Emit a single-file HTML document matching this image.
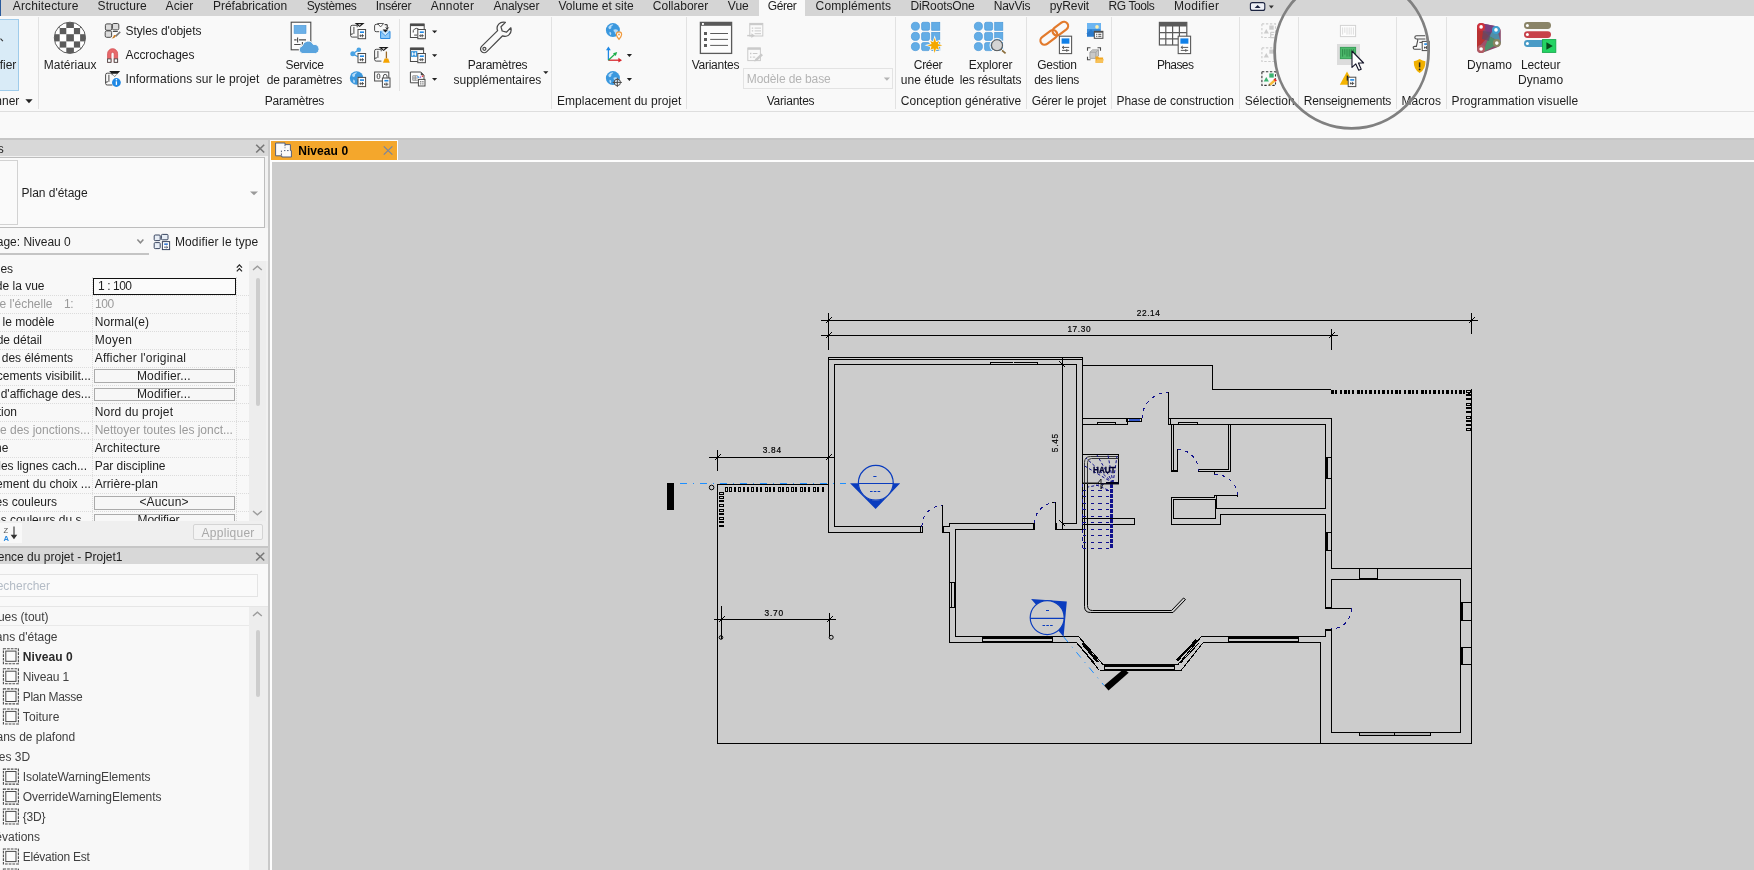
<!DOCTYPE html><html lang="fr"><head><meta charset="utf-8"><title>Revit - Niveau 0</title><style>
html,body{margin:0;padding:0}
body{width:1754px;height:870px;overflow:hidden;background:#cccccc;position:relative;font-family:"Liberation Sans",sans-serif;font-size:12px;color:#1e1e1e}
.abs,.g,.t,.b{position:absolute}
.g{left:0;top:0}
#labels,#panels,#ribbon,#canvas,#icons{will-change:transform}
.t{white-space:pre;line-height:14px;height:14px}
svg{overflow:visible}
</style></head><body>
<div class="g" id="canvas">
<div class="b" style="left:0px;top:137.6px;width:1754px;height:24.4px;background:#cdcdcd;"></div>
<div class="b" style="left:0px;top:137.6px;width:1754px;height:2.3px;background:#c6c6c6;"></div>
<div class="b" style="left:270px;top:159.8px;width:1484px;height:2.2px;background:#fdfdfd;"></div>
<div class="b" style="left:270px;top:140.2px;width:2px;height:729.8px;background:#fdfdfd;"></div>
<div class="b" style="left:269.8px;top:140.1px;width:128.2px;height:20.9px;background:#fdfdfd;"></div>
<div class="b" style="left:271px;top:141px;width:126px;height:18.8px;background:#f4a72c;"></div>
<svg id="plan" width="1754" height="870" viewBox="0 0 1754 870" style="position:absolute;left:0;top:0" shape-rendering="crispEdges">
<rect x="1359.5" y="732.5" width="71" height="3" fill="#b4b4b4" stroke="#000" stroke-width="1"/><path d="M1394.5,732V736" stroke="#000"/>
<path fill="none" stroke="#000" stroke-width="1" d="M821.0,320.5H1478.0M821.0,335.5H1338.0M828.5,313.0V350.0M1471.5,313.0V334.0M1331.5,329.0V350.0M825.5,323.5L832.0,317.0M825.5,338.5L832.0,332.0M1468.5,323.5L1475.0,317.0M1328.5,338.5L1335.0,332.0M709.0,457.5H834.5M717.5,450.0V471.0M714.5,460.5L720.5,454.5M825.5,460.5L831.5,454.5M714.0,619.5H836.0M721.5,606.0V639.0M829.5,613.0V636.0M718.5,622.5L724.5,616.5M826.5,622.5L832.5,616.5M1059.5,361.5L1065.5,367.5M1059.5,520.5L1065.5,526.5M717.5,484.0V744.0M717.0,743.5H1472.0M717.0,484.5H829.0M828.5,357.0V533.0M828.0,357.5H1083.0M828.0,359.5H1083.0M1082.5,357.0V530.0M834.5,364.0V527.0M834.0,364.5H1077.0M1076.5,364.0V524.0M1062.5,357.0V530.0M834.0,526.5H923.0M828.0,532.5H923.0M920.5,526.0V533.0M922.5,526.0V533.0M990.0,362.5H1013.0M1014.0,362.5H1037.0M990.5,362.0V364.0M1037.5,362.0V364.0M942.5,505.0V533.0M942.0,526.5H950.0M942.0,532.5H950.0M949.5,523.0V527.0M949.0,523.5H1035.0M955.0,529.5H1035.0M1055.5,502.0V530.0M1052.0,502.5H1056.0M1055.0,529.5H1083.0M1062.0,523.5H1077.0M949.5,532.0V643.0M955.5,529.0V637.0M949.0,582.5H956.0M949.0,607.5H956.0M951.5,582.0V608.0M955.0,636.5H1078.5M949.0,642.5H1076.5M982.5,636.0V643.0M1052.5,636.0V643.0M982.0,641.5H1052.0M1078.5,636.5L1103.0,664.5M1103.0,664.5L1178.0,664.5M1178.0,664.5L1201.5,636.5M1076.5,642.5L1099.5,670.5M1099.5,670.5L1181.0,670.5M1181.0,670.5L1203.2,642.5M1201.5,636.5H1326.0M1203.0,642.5H1321.0M1320.5,642.0V744.0M1104.5,664.0V671.0M1174.5,664.0V671.0M1104.0,669.5H1174.0M1228.5,636.0V643.0M1298.5,636.0V643.0M1228.0,641.5H1298.0M1325.5,424.0V509.0M1325.5,514.0V609.0M1325.5,629.0V637.0M1331.5,418.0V569.0M1331.5,579.0V609.0M1331.5,629.0V733.0M1325.0,457.5H1332.0M1325.0,478.5H1332.0M1325.0,532.5H1332.0M1325.0,550.5H1332.0M1082.0,365.5H1213.0M1212.5,365.0V390.0M1212.0,389.5H1331.0M1082.0,418.5H1128.0M1082.0,424.5H1128.0M1127.5,418.0V425.0M1097.0,422.5H1116.0M1097.5,422.0V425.0M1115.5,422.0V425.0M1168.5,392.0V425.0M1168.0,418.5H1332.0M1168.0,424.5H1326.0M1170.5,418.0V425.0M1171.5,424.0V472.0M1173.5,424.0V470.0M1171.0,471.5H1178.0M1177.5,449.0V472.0M1177.0,449.5H1181.0M1178.0,422.5H1197.0M1178.5,422.0V425.0M1197.5,422.0V425.0M1228.5,424.0V470.0M1230.5,424.0V472.0M1198.0,469.5H1229.0M1198.0,471.5H1231.0M1198.5,469.0V472.0M1214.5,471.0V475.0M1214.0,495.5H1238.0M1237.5,495.0V497.0M1171.0,497.5H1215.0M1214.5,495.0V498.0M1216.5,495.0V509.0M1216.0,508.5H1326.0M1171.5,497.0V525.0M1171.0,524.5H1221.0M1220.5,514.0V525.0M1220.0,514.5H1326.0M1173.0,499.5H1216.0M1173.0,518.5H1216.0M1173.5,499.0V519.0M1215.5,499.0V519.0M1082.0,518.5H1135.0M1082.0,524.5H1135.0M1134.5,518.0V525.0M1471.5,389.0V744.0M1331.0,568.5H1472.0M1331.0,579.5H1461.0M1359.5,568.0V580.0M1377.5,568.0V580.0M1331.0,732.5H1461.0M1460.5,579.0V733.0M1325.0,608.5H1352.0M1351.5,608.0V611.0M1460.0,602.5H1472.0M1460.0,620.5H1472.0M1460.0,647.5H1472.0M1460.0,664.5H1472.0M1082.0,454.5H1119.0M1118.5,454.0V484.0M1082.0,483.5H1119.0"/>
<rect x="942.0" y="526.0" width="2.0" height="7.0" fill="#000"/><rect x="1033.0" y="523.0" width="2.0" height="7.0" fill="#000"/><rect x="1055.0" y="523.0" width="2.0" height="7.0" fill="#000"/><rect x="953.5" y="582.0" width="2.0" height="26.0" fill="#000"/><rect x="982.0" y="636.0" width="70.0" height="3.0" fill="#000"/><rect x="1104.5" y="664.0" width="69.5" height="3.0" fill="#000"/><rect x="1228.0" y="636.0" width="70.0" height="3.0" fill="#000"/><rect x="1325.0" y="457.0" width="2.5" height="22.0" fill="#000"/><rect x="1325.0" y="532.0" width="2.5" height="19.0" fill="#000"/><rect x="1325.0" y="607.0" width="7.0" height="2.0" fill="#000"/><rect x="1325.0" y="629.0" width="7.0" height="2.0" fill="#000"/><rect x="1171.0" y="469.5" width="7.0" height="2.5" fill="#000"/><rect x="1359.0" y="577.5" width="19.0" height="2.5" fill="#000"/><rect x="1460.0" y="602.0" width="3.0" height="19.0" fill="#000"/><rect x="1460.0" y="647.0" width="3.0" height="18.0" fill="#000"/>
<path fill="none" stroke="#000" stroke-width="2.4" d="M1082.5,643.5L1098,662M1177,660.5L1196.5,640"/>
<path fill="none" stroke="#000" stroke-width="1" d="M1080,646.5L1095.5,664.5M1180.5,663L1199,643"/>
<g shape-rendering="auto" fill="none" stroke="#000" stroke-width="1"><path d="M1084.5,484V606.5Q1084.5,612.5 1090.5,612.5H1173L1185.5,599.5"/><path d="M1087.5,484V605.5Q1087.5,610.5 1092.5,610.5H1171.5L1183.5,598L1185.5,599.5"/></g>
<g shape-rendering="auto" fill="none" stroke="#333" stroke-width="1"><path d="M1118.5,456.5H1090.5Q1084.5,456.5 1084.5,462.5V484"/><path d="M1118.5,458.5H1091.5Q1087.5,458.5 1087.5,462.5V484"/></g>
<rect x="725" y="487" width="3" height="5" fill="#000"/><rect x="726" y="488" width="1" height="3" fill="#ccc"/><rect x="729" y="487" width="3" height="5" fill="#000"/><rect x="730" y="488" width="1" height="3" fill="#ccc"/><rect x="734" y="487" width="2" height="5" fill="#000"/><rect x="738" y="487" width="3" height="5" fill="#000"/><rect x="739" y="488" width="1" height="3" fill="#ccc"/><rect x="743" y="487" width="2" height="5" fill="#000"/><rect x="747" y="487" width="2" height="5" fill="#000"/><rect x="751" y="487" width="3" height="5" fill="#000"/><rect x="752" y="488" width="1" height="3" fill="#ccc"/><rect x="756" y="487" width="2" height="5" fill="#000"/><rect x="760" y="487" width="2" height="5" fill="#000"/><rect x="765" y="487" width="3" height="5" fill="#000"/><rect x="766" y="488" width="1" height="3" fill="#ccc"/><rect x="769" y="487" width="2" height="5" fill="#000"/><rect x="773" y="487" width="2" height="5" fill="#000"/><rect x="778" y="487" width="3" height="5" fill="#000"/><rect x="779" y="488" width="1" height="3" fill="#ccc"/><rect x="782" y="487" width="2" height="5" fill="#000"/><rect x="786" y="487" width="3" height="5" fill="#000"/><rect x="787" y="488" width="1" height="3" fill="#ccc"/><rect x="791" y="487" width="3" height="5" fill="#000"/><rect x="792" y="488" width="1" height="3" fill="#ccc"/><rect x="795" y="487" width="2" height="5" fill="#000"/><rect x="800" y="487" width="3" height="5" fill="#000"/><rect x="801" y="488" width="1" height="3" fill="#ccc"/><rect x="804" y="487" width="2" height="5" fill="#000"/><rect x="808" y="487" width="2" height="5" fill="#000"/><rect x="813" y="487" width="3" height="5" fill="#000"/><rect x="814" y="488" width="1" height="3" fill="#ccc"/><rect x="817" y="487" width="2" height="5" fill="#000"/><rect x="822" y="487" width="2" height="5" fill="#000"/><rect x="719" y="492" width="5" height="3" fill="#000"/><rect x="720" y="493" width="3" height="1" fill="#ccc"/><rect x="719" y="496" width="5" height="3" fill="#000"/><rect x="720" y="497" width="3" height="1" fill="#ccc"/><rect x="719" y="500" width="5" height="2" fill="#000"/><rect x="719" y="504" width="5" height="3" fill="#000"/><rect x="720" y="505" width="3" height="1" fill="#ccc"/><rect x="719" y="509" width="5" height="3" fill="#000"/><rect x="720" y="510" width="3" height="1" fill="#ccc"/><rect x="719" y="513" width="5" height="2" fill="#000"/><rect x="719" y="517" width="5" height="3" fill="#000"/><rect x="720" y="518" width="3" height="1" fill="#ccc"/><rect x="719" y="521" width="5" height="2" fill="#000"/><rect x="719" y="525" width="5" height="2" fill="#000"/><rect x="1331" y="390" width="3" height="4" fill="#000"/><rect x="1335" y="390" width="2" height="4" fill="#000"/><rect x="1336" y="391" width="0" height="2" fill="#ccc"/><rect x="1340" y="390" width="2" height="4" fill="#000"/><rect x="1344" y="390" width="3" height="4" fill="#000"/><rect x="1348" y="390" width="2" height="4" fill="#000"/><rect x="1349" y="391" width="0" height="2" fill="#ccc"/><rect x="1352" y="390" width="2" height="4" fill="#000"/><rect x="1357" y="390" width="3" height="4" fill="#000"/><rect x="1361" y="390" width="2" height="4" fill="#000"/><rect x="1362" y="391" width="0" height="2" fill="#ccc"/><rect x="1365" y="390" width="2" height="4" fill="#000"/><rect x="1369" y="390" width="3" height="4" fill="#000"/><rect x="1374" y="390" width="2" height="4" fill="#000"/><rect x="1375" y="391" width="0" height="2" fill="#ccc"/><rect x="1378" y="390" width="2" height="4" fill="#000"/><rect x="1382" y="390" width="3" height="4" fill="#000"/><rect x="1387" y="390" width="2" height="4" fill="#000"/><rect x="1388" y="391" width="0" height="2" fill="#ccc"/><rect x="1391" y="390" width="2" height="4" fill="#000"/><rect x="1395" y="390" width="3" height="4" fill="#000"/><rect x="1399" y="390" width="2" height="4" fill="#000"/><rect x="1400" y="391" width="0" height="2" fill="#ccc"/><rect x="1404" y="390" width="2" height="4" fill="#000"/><rect x="1408" y="390" width="3" height="4" fill="#000"/><rect x="1412" y="390" width="2" height="4" fill="#000"/><rect x="1413" y="391" width="0" height="2" fill="#ccc"/><rect x="1416" y="390" width="2" height="4" fill="#000"/><rect x="1421" y="390" width="3" height="4" fill="#000"/><rect x="1425" y="390" width="2" height="4" fill="#000"/><rect x="1426" y="391" width="0" height="2" fill="#ccc"/><rect x="1429" y="390" width="2" height="4" fill="#000"/><rect x="1433" y="390" width="3" height="4" fill="#000"/><rect x="1438" y="390" width="2" height="4" fill="#000"/><rect x="1439" y="391" width="0" height="2" fill="#ccc"/><rect x="1442" y="390" width="2" height="4" fill="#000"/><rect x="1446" y="390" width="3" height="4" fill="#000"/><rect x="1451" y="390" width="2" height="4" fill="#000"/><rect x="1452" y="391" width="0" height="2" fill="#ccc"/><rect x="1455" y="390" width="2" height="4" fill="#000"/><rect x="1459" y="390" width="3" height="4" fill="#000"/><rect x="1463" y="390" width="2" height="4" fill="#000"/><rect x="1464" y="391" width="0" height="2" fill="#ccc"/><rect x="1468" y="390" width="2" height="4" fill="#000"/><rect x="1466" y="390" width="5" height="3" fill="#000"/><rect x="1467" y="391" width="3" height="1" fill="#ccc"/><rect x="1466" y="394" width="5" height="2" fill="#000"/><rect x="1466" y="398" width="5" height="2" fill="#000"/><rect x="1466" y="403" width="5" height="3" fill="#000"/><rect x="1467" y="404" width="3" height="1" fill="#ccc"/><rect x="1466" y="407" width="5" height="2" fill="#000"/><rect x="1466" y="411" width="5" height="2" fill="#000"/><rect x="1466" y="416" width="5" height="3" fill="#000"/><rect x="1467" y="417" width="3" height="1" fill="#ccc"/><rect x="1466" y="420" width="5" height="2" fill="#000"/><rect x="1466" y="424" width="5" height="2" fill="#000"/><rect x="1466" y="428" width="5" height="3" fill="#000"/><rect x="1467" y="429" width="3" height="1" fill="#ccc"/>
<g shape-rendering="auto" fill="none" stroke="#000" stroke-width="1"><circle cx="711.6" cy="487.5" r="2.3"/><circle cx="721" cy="637.5" r="1.8"/><circle cx="831.2" cy="637.3" r="2"/></g>
<rect x="667" y="483" width="7" height="27" fill="#000"/>
<polygon points="1104.1,685.4 1123.7,669 1128.7,672.8 1108.5,690.5" fill="#000" shape-rendering="auto"/>
<path d="M674,483.5H846" stroke="#1e8fff" stroke-width="1" stroke-dasharray="7 6 1 6" stroke-dashoffset="-6" fill="none"/>
<path d="M1063.6,636.8L1104,685.4" stroke="#1e8fff" stroke-width="1" stroke-dasharray="7 6 1 6" fill="none" shape-rendering="auto"/>
<g shape-rendering="auto"><path fill="#0a3cbe" fill-rule="evenodd" d="M850,483.3H900.2L875.6,509Z M858.4,483.3A17.4,17.4 0 0 0 893.2,483.3Z"/><circle cx="875.8" cy="482.8" r="17.4" fill="none" stroke="#0a3cbe" stroke-width="1.2"/><path d="M858,483.5H894" stroke="#0a3cbe" stroke-width="1.2"/><path d="M873.3,476.5h3.2M870,491.5h2.6m1.2,0h2.6m1.2,0h2.6" stroke="#0a3cbe" stroke-width="1"/></g>
<g shape-rendering="auto"><path fill="#0a3cbe" fill-rule="evenodd" d="M1031.1,599.1L1066.8,601.6L1063.6,636.8Z"/><circle cx="1047.2" cy="617.6" r="17" fill="#ccc" stroke="#0a3cbe" stroke-width="1.2"/><path d="M1030,618.4H1064.4" stroke="#0a3cbe" stroke-width="1.2"/><path d="M1046,610.5h3M1042.5,625.5h2.6m1.2,0h2.6m1.2,0h2.6" stroke="#0a3cbe" stroke-width="1"/></g>
<path d="M922,526.5A20.5,20.5 0 0 1 942,505.5M1034.5,523.5A21,21 0 0 1 1055,502.5M1142,418.5A26,26 0 0 1 1168,392.5M1177.5,449.5A21,21 0 0 1 1198.5,470.5M1214.5,474.5A22,22 0 0 1 1237.5,495.5M1351.5,608.5A20.5,20.5 0 0 1 1331.5,629" fill="none" stroke="#10108c" stroke-width="1" stroke-dasharray="3.2 4.6" shape-rendering="crispEdges"/>
<rect x="1126.5" y="418.5" width="15" height="3" fill="none" stroke="#000"/><rect x="1128.5" y="419" width="11" height="2" fill="#3558c8"/>
<path d="M1083,490.0H1110M1083,496.5H1110M1083,503.0H1110M1083,509.5H1110M1083,516.0H1110M1083,522.5H1110M1083,529.0H1110M1083,535.5H1110M1083,542.0H1110M1083,548.5H1110M1082.5,484V549" fill="none" stroke="#10108c" stroke-width="1" stroke-dasharray="3.4 4.2"/>
<path d="M1111.5,484V549" fill="none" stroke="#10108c" stroke-width="3" stroke-dasharray="3.5 1.5"/>
<path d="M1113,483L1083,465M1113,483L1086,458M1113,483L1097,455M1113,483L1108,455M1113,483L1117,456M1104,484L1088,487M1108,490L1094,484" fill="none" stroke="#10108c" stroke-width="1" stroke-dasharray="3 2" shape-rendering="auto"/>
<path d="M1083,483H1098L1101,479V489L1103,484H1119" fill="none" stroke="#222" stroke-width="1" shape-rendering="auto"/>
<path d="M1106,483H1119" stroke="#000018" stroke-width="2"/>
<text x="1148.3" y="316" textLength="23.2" font-family="Liberation Sans, sans-serif" font-size="8.3" fill="#000" stroke="#000" stroke-width="0.2" text-anchor="middle" lengthAdjust="spacing" shape-rendering="auto">22.14</text>
<text x="1079" y="332" textLength="23.2" font-family="Liberation Sans, sans-serif" font-size="8.3" fill="#000" stroke="#000" stroke-width="0.2" text-anchor="middle" lengthAdjust="spacing" shape-rendering="auto">17.30</text>
<text x="771.9" y="453" textLength="18.4" font-family="Liberation Sans, sans-serif" font-size="8.3" fill="#000" stroke="#000" stroke-width="0.2" text-anchor="middle" lengthAdjust="spacing" shape-rendering="auto">3.84</text>
<text x="773.8" y="616" textLength="18.4" font-family="Liberation Sans, sans-serif" font-size="8.3" fill="#000" stroke="#000" stroke-width="0.2" text-anchor="middle" lengthAdjust="spacing" shape-rendering="auto">3.70</text>
<text transform="translate(1058.2,443) rotate(-90)" textLength="18.4" font-family="Liberation Sans, sans-serif" font-size="8.3" fill="#000" stroke="#000" stroke-width="0.2" text-anchor="middle" lengthAdjust="spacing" shape-rendering="auto">5.45</text>
<text x="1104.3" y="472.8" font-family="Liberation Sans, sans-serif" font-weight="bold" font-size="8.6" fill="#000030" stroke="#000030" stroke-width="0.3" text-anchor="middle" textLength="22.5" lengthAdjust="spacingAndGlyphs" shape-rendering="auto">HAUT</text>
</svg>
</div>
<div class="g" id="ribbon">
<div class="b" style="left:0px;top:0px;width:1754px;height:112px;background:#f9f9f9;"></div>
<div class="b" style="left:0px;top:0px;width:1754px;height:15.6px;background:#d5d5d5;"></div>
<div class="b" style="left:759.1px;top:0px;width:46.1px;height:16px;background:#f9f9f9;"></div>
<div class="b" style="left:0px;top:0px;width:1.2px;height:15.6px;background:#2a5a9c;"></div>
<div class="b" style="left:0px;top:111px;width:1754px;height:1px;background:#dedede;"></div>
<div class="b" style="left:0px;top:112px;width:1754px;height:25.6px;background:#f9f9f9;"></div>
<div class="b" style="left:-2px;top:19.4px;width:21px;height:71.4px;background:#d9ebf7;box-sizing:border-box;border:1px solid #9fcbea;"></div>
<div class="b" style="left:38px;top:17px;width:1px;height:92px;background:#e2e2e2;"></div>
<div class="b" style="left:551px;top:17px;width:1px;height:92px;background:#e2e2e2;"></div>
<div class="b" style="left:686px;top:17px;width:1px;height:92px;background:#e2e2e2;"></div>
<div class="b" style="left:894.9px;top:17px;width:1px;height:92px;background:#e2e2e2;"></div>
<div class="b" style="left:1025.9px;top:17px;width:1px;height:92px;background:#e2e2e2;"></div>
<div class="b" style="left:1111.1px;top:17px;width:1px;height:92px;background:#e2e2e2;"></div>
<div class="b" style="left:1238.9px;top:17px;width:1px;height:92px;background:#e2e2e2;"></div>
<div class="b" style="left:1298.1px;top:17px;width:1px;height:92px;background:#e2e2e2;"></div>
<div class="b" style="left:1396.2px;top:17px;width:1px;height:92px;background:#e2e2e2;"></div>
<div class="b" style="left:1446.1px;top:17px;width:1px;height:92px;background:#e2e2e2;"></div>
<div class="b" style="left:399px;top:19.4px;width:1px;height:71.4px;background:#e2e2e2;"></div>
<div class="b" style="left:743.2px;top:68.2px;width:149.6px;height:21.2px;background:#f9f9f9;box-sizing:border-box;border:1px solid #e3e3e3;"></div>
<div class="b" style="left:1336.5px;top:44.3px;width:23.3px;height:21.2px;background:#dcdcdc;"></div>
</div>
<div class="g" id="panels">
<div class="b" style="left:0px;top:139.9px;width:268.1px;height:730.1px;background:#f1f1f1;"></div>
<div class="b" style="left:268.1px;top:139.9px;width:1.8px;height:730.1px;background:#c9c9c9;"></div>
<div class="b" style="left:0px;top:139.9px;width:268.1px;height:16.5px;background:#d8d8d8;"></div>
<div class="b" style="left:-2px;top:156.8px;width:266.8px;height:70.8px;background:#fafafa;box-sizing:border-box;border:1px solid #bdbdbd;"></div>
<div class="b" style="left:-2px;top:159.7px;width:19.6px;height:65.1px;background:#fafafa;box-sizing:border-box;border:1px solid #d2d2d2;"></div>
<div class="b" style="left:0px;top:228px;width:268.1px;height:32.5px;background:#f8f8f8;"></div>
<div class="b" style="left:0px;top:253.2px;width:148.8px;height:2px;background:#c4c4c4;"></div>
<div class="b" style="left:0px;top:260.5px;width:249px;height:260.3px;background:#f8f8f8;"></div>
<div class="b" style="left:0px;top:295px;width:249px;height:1px;border-top:1px dotted #dcdcdc;"></div>
<div class="b" style="left:0px;top:313px;width:249px;height:1px;border-top:1px dotted #dcdcdc;"></div>
<div class="b" style="left:0px;top:331px;width:249px;height:1px;border-top:1px dotted #dcdcdc;"></div>
<div class="b" style="left:0px;top:349px;width:249px;height:1px;border-top:1px dotted #dcdcdc;"></div>
<div class="b" style="left:0px;top:367px;width:249px;height:1px;border-top:1px dotted #dcdcdc;"></div>
<div class="b" style="left:0px;top:385px;width:249px;height:1px;border-top:1px dotted #dcdcdc;"></div>
<div class="b" style="left:0px;top:403px;width:249px;height:1px;border-top:1px dotted #dcdcdc;"></div>
<div class="b" style="left:0px;top:421px;width:249px;height:1px;border-top:1px dotted #dcdcdc;"></div>
<div class="b" style="left:0px;top:439px;width:249px;height:1px;border-top:1px dotted #dcdcdc;"></div>
<div class="b" style="left:0px;top:457px;width:249px;height:1px;border-top:1px dotted #dcdcdc;"></div>
<div class="b" style="left:0px;top:475px;width:249px;height:1px;border-top:1px dotted #dcdcdc;"></div>
<div class="b" style="left:0px;top:493px;width:249px;height:1px;border-top:1px dotted #dcdcdc;"></div>
<div class="b" style="left:0px;top:511px;width:249px;height:1px;border-top:1px dotted #dcdcdc;"></div>
<div class="b" style="left:92.3px;top:277px;width:1px;height:243.8px;border-left:1px dotted #dcdcdc;"></div>
<div class="b" style="left:235.8px;top:277px;width:1px;height:243.8px;border-left:1px dotted #dcdcdc;"></div>
<div class="b" style="left:93px;top:278px;width:143px;height:16.7px;background:#fbfbfb;box-sizing:border-box;border:1px solid #111;"></div>
<div class="b" style="left:94.2px;top:369.3px;width:140.8px;height:14.2px;background:#f7f7f7;box-sizing:border-box;border:1px solid #ababab;"></div>
<div class="b" style="left:94.2px;top:387.5px;width:140.8px;height:13.8px;background:#f7f7f7;box-sizing:border-box;border:1px solid #ababab;"></div>
<div class="b" style="left:94.2px;top:495.5px;width:140.8px;height:14px;background:#f7f7f7;box-sizing:border-box;border:1px solid #ababab;"></div>
<div class="b" style="left:0;top:510px;width:249px;height:10.8px;overflow:hidden"><div class="b" style="left:94.2px;top:3.7px;width:140.8px;height:14.3px;background:#f7f7f7;box-sizing:border-box;border:1px solid #ababab;"></div><span class="t" style="left:137.5px;top:2.6px;letter-spacing:-0.1px">Modifier...</span><span class="t" style="left:-60px;top:2.6px;width:142px;text-align:right">Schéma des couleurs du s...</span></div>
<div class="b" style="left:249px;top:260.5px;width:16.8px;height:260.3px;background:#ededed;"></div>
<div class="b" style="left:255.5px;top:278.3px;width:4.2px;height:127.5px;background:#cdcdcd;border-radius:2px;"></div>
<div class="b" style="left:0px;top:520.8px;width:268.1px;height:25px;background:#efefef;"></div>
<div class="b" style="left:0px;top:522.5px;width:21.7px;height:20.8px;background:#f8f8f8;"></div>
<div class="b" style="left:193.3px;top:523.7px;width:69.5px;height:16.6px;background:#f3f3f3;box-sizing:border-box;border:1px solid #d4d4d4;border-radius:2px;"></div>
<div class="b" style="left:0px;top:545.8px;width:268.1px;height:2.5px;background:#c6c6c6;"></div>
<div class="b" style="left:0px;top:548.3px;width:268.1px;height:15.5px;background:#d8d8d8;"></div>
<div class="b" style="left:0px;top:563.8px;width:268.1px;height:42.9px;background:#f9f9f9;"></div>
<div class="b" style="left:-2px;top:573.8px;width:259.5px;height:23.4px;background:#fafafa;box-sizing:border-box;border:1px solid #e4e4e4;"></div>
<div class="b" style="left:0px;top:606.7px;width:249px;height:263.3px;background:#f8f8f8;"></div>
<div class="b" style="left:0px;top:606.2px;width:268.1px;height:1px;background:#e6e6e6;"></div>
<div class="b" style="left:0px;top:625px;width:249px;height:1px;background:#e9e9e9;"></div>
<div class="b" style="left:249px;top:606.7px;width:19.1px;height:263.3px;background:#ededed;"></div>
<div class="b" style="left:255.5px;top:629.5px;width:4.2px;height:67.5px;background:#cdcdcd;border-radius:2px;"></div>
</div>
<svg class="g" id="icons" width="1754" height="870" viewBox="0 0 1754 870">
<rect x="1250.4" y="2.6" width="14.4" height="7.8" rx="2" fill="#eef0f6" stroke="#1b2340" stroke-width="1.1"/><path d="M1254.6,8h6l-3,-3z" fill="#1b2340"/><path d="M1268.8,5.6h5l-2.5,2.8z" fill="#333"/>
<path d="M0.5,38.6l2.4,2.6" stroke="#333" stroke-width="1.1"/>
<path d="M25.4,99.2h7.2l-3.6,4z" fill="#222"/>
<clipPath id="cm"><circle cx="69.9" cy="37.8" r="15.6"/></clipPath><circle cx="69.9" cy="37.8" r="15.6" fill="#fff"/><g clip-path="url(#cm)" fill="#5c5c5c"><rect x="54" y="21.8" width="5.7" height="6.2"/><rect x="66.3" y="21.8" width="7.6" height="6.2"/><rect x="80.1" y="21.8" width="5.7" height="6.2"/><rect x="59.7" y="28" width="6.6" height="6.2"/><rect x="73.9" y="28" width="6.2" height="6.2"/><rect x="54" y="34.2" width="5.7" height="7.2"/><rect x="66.3" y="34.2" width="7.6" height="7.2"/><rect x="80.1" y="34.2" width="5.7" height="7.2"/><rect x="59.7" y="41.4" width="6.6" height="6.2"/><rect x="73.9" y="41.4" width="6.2" height="6.2"/><rect x="54" y="47.6" width="5.7" height="6.1"/><rect x="66.3" y="47.6" width="7.6" height="6.1"/><rect x="80.1" y="47.6" width="5.7" height="6.1"/></g><circle cx="69.9" cy="37.8" r="15.6" fill="none" stroke="#5c5c5c" stroke-width="1"/>
<g transform="translate(104.8,23.3)" ><rect x="0.6" y="0.6" width="6.4" height="6.4" rx="1.4" fill="#dcdcdc" stroke="#4a4a4a" stroke-width="1"/><rect x="7.6" y="0.2" width="6.4" height="6.4" rx="1.4" fill="#dcdcdc" stroke="#4a4a4a" stroke-width="1"/><rect x="0.4" y="7.6" width="6.4" height="6.4" rx="1.4" fill="#dcdcdc" stroke="#4a4a4a" stroke-width="1"/><path d="M8,8.2h5" stroke="#4a4a4a" stroke-width="1"/><path d="M15.4,8.6l-4.6,4.4" stroke="#777" stroke-width="1.6"/><path d="M11.4,12.2q-1,2.6 -4.6,3q2,-1.6 2.4,-3.6z" fill="#c7761a"/></g>
<g transform="translate(107,47.3)" ><path d="M0.6,15V6.4a5,5 0 0 1 10,0V15h-3.4V6.6a1.6,1.6 0 0 0 -3.2,0V15z" fill="#e8696b" stroke="#d24d50" stroke-width="0.8"/><rect x="0.6" y="11.6" width="3.4" height="3.4" fill="#fff" stroke="#4a4a4a" stroke-width="0.9"/><rect x="7.2" y="11.6" width="3.4" height="3.4" fill="#fff" stroke="#4a4a4a" stroke-width="0.9"/></g>
<g transform="translate(105,71.4)" ><path d="M2.2,1.7999999999999998h5v2M2.2,1.7999999999999998q-1.6,0 -1.6,1.6v8.6q0,1.6 1.6,1.6h5.2M0.6,11.799999999999999q0,-1.4 1.6,-1.4h0.8M3.9,3.4v7" fill="none" stroke="#4a4a4a" stroke-width="1"/><path d="M4.2,-0.4h11l-5.5,5.8z" fill="#1a1a1a"/><path d="M7,2.3h5.4l-2.7,2.5z" fill="#f9f9f9"/><circle cx="11.4" cy="11.1" r="4.4" fill="#1e88e5"/><path d="M11.4,9.9v3.6" stroke="#fff" stroke-width="1.3"/><circle cx="11.4" cy="8.4" r="0.8" fill="#fff"/></g>
<rect x="291.2" y="22.2" width="19.6" height="27.6" fill="#fcfcfc" stroke="#4a4a4a" stroke-width="1.1"/><rect x="294.1" y="25.3" width="11.9" height="8.2" fill="#6bb0e8" stroke="#4a98d8" stroke-width="0.6"/><path d="M294.2,39.9h2.4M299,39.9h7M297.6,37.4v5M294.2,44.5h6.4M302.4,42v5M304,44.5h1" stroke="#4a4a4a" stroke-width="1.1" fill="none"/><path d="M302.8,53.6a3.9,3.9 0 0 1 -0.5,-7.7a5.8,5.8 0 0 1 11,-1.4a4.6,4.6 0 0 1 2.2,9.1z" fill="#5aa4de" stroke="#f9f9f9" stroke-width="1"/>
<g transform="translate(350,23.5)" ><path d="M2.2,1.7999999999999998h5v2M2.2,1.7999999999999998q-1.6,0 -1.6,1.6v8.6q0,1.6 1.6,1.6h5.2M0.6,11.799999999999999q0,-1.4 1.6,-1.4h0.8M3.9,3.4v7" fill="none" stroke="#4a4a4a" stroke-width="1"/><path d="M4.6,-0.4h10l-5.0,4z" fill="#1a1a1a"/><path d="M8.0,0.7000000000000001h3.2l-1.6,1.5z" fill="#fff"/><rect x="8" y="6" width="7.6" height="9.2" fill="#fdfdfd" stroke="#4a4a4a" stroke-width="1"/><rect x="10" y="7.9" width="3.9999999999999996" height="1.6" fill="#1e88e5"/><path d="M9.8,12.2h4.2M12.4,10.6v3.2M11,11.2l-1.2,1l1.2,1" stroke="#4a4a4a" stroke-width="0.9" fill="none"/></g>
<g transform="translate(374,23.5)" ><path d="M2.2,0.8h3M2.2,0.8q-1.6,0 -1.6,1.6v4.4q0,1.4 1.6,1.4h3" fill="none" stroke="#4a4a4a" stroke-width="1"/><path d="M3.6,0h6l-3,3.4z" fill="#fff" stroke="#4a4a4a" stroke-width="0.9"/><path d="M10.6,1.2h2.6v4M11.8,4l1.4,1.6l1.4,-1.6" fill="none" stroke="#222" stroke-width="1"/><path d="M6.6,7.8h9.4v7.2h-9.4z" fill="#90caf9" stroke="#2b8ae0" stroke-width="1"/><path d="M6.6,7.8l4.7,4.4l4.7,-4.4" fill="#cfe8fc" stroke="#2b8ae0" stroke-width="0.8"/><path d="M8.6,6h5.6l-2.8,3z" fill="#1a1a1a"/></g>
<g transform="translate(350,47.5)" ><path d="M2.8,6.2l6,-4M2.8,6.2l5,3" stroke="#3b98de" stroke-width="1.2"/><circle cx="8.8" cy="2.2" r="2.3" fill="#4aa3e4"/><circle cx="2.8" cy="6.2" r="2.5" fill="#4aa3e4"/><rect x="8" y="6" width="7.6" height="9.2" fill="#fdfdfd" stroke="#4a4a4a" stroke-width="1"/><rect x="10" y="7.9" width="3.9999999999999996" height="1.6" fill="#1e88e5"/><path d="M9.8,12.2h4.2M12.4,10.6v3.2M11,11.2l-1.2,1l1.2,1" stroke="#4a4a4a" stroke-width="0.9" fill="none"/></g>
<g transform="translate(374,47.5)" ><path d="M2.2,1.7999999999999998h5v2M2.2,1.7999999999999998q-1.6,0 -1.6,1.6v8.6q0,1.6 1.6,1.6h5.2M0.6,11.799999999999999q0,-1.4 1.6,-1.4h0.8M3.9,3.4v7" fill="none" stroke="#4a4a4a" stroke-width="1"/><path d="M4.6,-0.4h10l-5.0,4z" fill="#1a1a1a"/><path d="M8.0,0.7000000000000001h3.2l-1.6,1.5z" fill="#fff"/><path d="M12.4,4v7" stroke="#9a6a2a" stroke-width="1.3"/><path d="M10.6,11h3.6l1.6,4.2h-6.8z" fill="#f5a300"/></g>
<g transform="translate(350,71.4)" ><circle cx="6.6" cy="6.6" r="6.8" fill="#3b98de"/><path d="M2.0,3.3999999999999995q2,-2.8 5,-2.6q-0.4,1.6 -2,2.2q0.6,1.8 -1,2.6q-1.6,0.4 -2,-2.2zM7.199999999999999,6.199999999999999q2.4,-1.2 4.4,0.4q0.2,2.6 -1.8,4.4q-1.6,-0.4 -1.4,-2.4q-1.4,-0.8 -1.2,-2.4zM3.1999999999999997,8.2q1.6,0.2 1.8,1.8q-0.2,1.6 -1,1.8q-1.2,-1.4 -0.8,-3.6z" fill="#b4dbf8"/><rect x="8" y="6" width="7.6" height="9.2" fill="#fdfdfd" stroke="#4a4a4a" stroke-width="1"/><rect x="10" y="7.9" width="3.9999999999999996" height="1.6" fill="#1e88e5"/><path d="M9.8,12.2h4.2M12.4,10.6v3.2M11,11.2l-1.2,1l1.2,1" stroke="#4a4a4a" stroke-width="0.9" fill="none"/></g>
<g transform="translate(374,71.4)" ><rect x="0.6" y="0.6" width="14.2" height="9" fill="#fcfcfc" stroke="#4a4a4a" stroke-width="1"/><rect x="3.2" y="2.6" width="2.6" height="4.6" rx="1.2" fill="none" stroke="#4a4a4a" stroke-width="1"/><path d="M9.4,6.4v-1.6a1.8,1.8 0 0 1 3.6,0v1.6" fill="none" stroke="#4a4a4a" stroke-width="1"/><rect x="8.4" y="6.6" width="7.6" height="9.2" fill="#fdfdfd" stroke="#4a4a4a" stroke-width="1"/><rect x="10.4" y="8.5" width="3.9999999999999996" height="1.6" fill="#1e88e5"/><path d="M10.200000000000001,12.8h4.2M12.8,11.2v3.2M11.4,11.8l-1.2,1l1.2,1" stroke="#4a4a4a" stroke-width="0.9" fill="none"/></g>
<g transform="translate(409.8,23.5)" ><rect x="0.6" y="0.6" width="13.8" height="13.4" fill="#fcfcfc" stroke="#4a4a4a" stroke-width="1"/><rect x="0.6" y="0.2" width="13.8" height="2.4" fill="#4a4a4a"/><path d="M4.4,11.6h3M3.4,9a3.4,3.4 0 0 1 5.4,-3.4" fill="none" stroke="#4a4a4a" stroke-width="1"/><rect x="8" y="6" width="7.6" height="9.2" fill="#fdfdfd" stroke="#4a4a4a" stroke-width="1"/><rect x="10" y="7.9" width="3.9999999999999996" height="1.6" fill="#1e88e5"/><path d="M9.8,12.2h4.2M12.4,10.6v3.2M11,11.2l-1.2,1l1.2,1" stroke="#4a4a4a" stroke-width="0.9" fill="none"/></g>
<path d="M432,30.4h5.2l-2.6,2.9z" fill="#222"/>
<g transform="translate(409.8,47.5)" ><rect x="0.6" y="0.6" width="13.2" height="13.4" fill="#fcfcfc" stroke="#4a4a4a" stroke-width="1"/><rect x="0.6" y="0.2" width="13.2" height="2.4" fill="#4a4a4a"/><rect x="0.9" y="3.6" width="6.6" height="5.8" fill="#3b98de"/><path d="M2.6,4.8v3.4M5.6,4.8v3.4M2.6,6.5h3" stroke="#fff" stroke-width="1"/><rect x="8" y="6" width="7.6" height="9.2" fill="#fdfdfd" stroke="#4a4a4a" stroke-width="1"/><rect x="10" y="7.9" width="3.9999999999999996" height="1.6" fill="#1e88e5"/><path d="M9.8,12.2h4.2M12.4,10.6v3.2M11,11.2l-1.2,1l1.2,1" stroke="#4a4a4a" stroke-width="0.9" fill="none"/></g>
<path d="M432,54.2h5.2l-2.6,2.9z" fill="#222"/>
<g transform="translate(409.8,71.4)" ><path d="M0.6,0.6h10.4l3.2,3.2v7.6h-13.6z" fill="#fcfcfc" stroke="#4a4a4a" stroke-width="1"/><path d="M11,0.6v3.2h3.2z" fill="#4a4a4a"/><path d="M3,4.4h5M3,6.6h5M3,8.8h5M3,4.4v4.6M5.4,4.4v4.6" stroke="#888" stroke-width="0.9" fill="none"/><path d="M7.6,5l1.6,1.2" stroke="#1e88e5" stroke-width="1.2"/><path d="M10,6.2l1.2,-1" stroke="#8a3fd8" stroke-width="1.2"/><path d="M12.2,5.4l1.4,-1.4" stroke="#e53935" stroke-width="1.2"/><rect x="8.6" y="8" width="6.6" height="6.6" fill="#fcfcfc" stroke="#4a4a4a" stroke-width="1"/><path d="M10.2,9.6h1.4v1.4h-1.4zM12.4,9.6h1.4v1.4h-1.4zM10.2,11.8h1.4v1.4h-1.4zM12.4,11.8h1.4v1.4h-1.4z" fill="#888"/></g>
<path d="M432,77.9h5.2l-2.6,2.9z" fill="#222"/>
<g fill="none" stroke="#4a4a4a" stroke-width="1.25" stroke-linejoin="round"><path d="M481.6,46.4L497.6,30.6C495.6,25.6 500,21 505.4,22.4L501,26.8L502.2,31L506.4,32.2L510.8,27.8C512.4,33.2 507.6,37.8 502.6,35.8L486.8,51.6A3.6,3.6 0 0 1 481.6,46.4z"/><circle cx="484.4" cy="48.8" r="1.5"/></g>
<path d="M543.2,71.2h5.2l-2.6,2.9z" fill="#222"/>
<circle cx="612.9" cy="30.1" r="7" fill="#3b98de"/><path d="M608.3,26.900000000000002q2,-2.8 5,-2.6q-0.4,1.6 -2,2.2q0.6,1.8 -1,2.6q-1.6,0.4 -2,-2.2zM613.5,29.700000000000003q2.4,-1.2 4.4,0.4q0.2,2.6 -1.8,4.4q-1.6,-0.4 -1.4,-2.4q-1.4,-0.8 -1.2,-2.4zM609.5,31.700000000000003q1.6,0.2 1.8,1.8q-0.2,1.6 -1,1.8q-1.2,-1.4 -0.8,-3.6z" fill="#b4dbf8"/><path d="M619,39.4q-2.6,-3.2 -2.6,-4.9a2.6,2.6 0 0 1 5.2,0q0,1.7 -2.6,4.9z" fill="#fff" stroke="#f09a3e" stroke-width="1.2"/><circle cx="619" cy="34.5" r="0.9" fill="#f09a3e"/>
<path d="M608.4,60.2V49" stroke="#1e88e5" stroke-width="1.3"/><path d="M606,50.2l2.4,-3.6l2.4,3.6z" fill="#1e88e5"/><path d="M608.4,60.2H619" stroke="#d9262c" stroke-width="1.3"/><path d="M618.4,57.8l3.6,2.4l-3.6,2.4z" fill="#d9262c"/><path d="M608.4,60.2L615,54" stroke="#1fae4b" stroke-width="1.2"/><path d="M613,53.2l4.2,-1.2l-1.4,4z" fill="#1fae4b"/>
<path d="M626.8,54.1h5.2l-2.6,2.9z" fill="#222"/>
<circle cx="612.9" cy="78.1" r="7" fill="#3b98de"/><path d="M608.3,74.89999999999999q2,-2.8 5,-2.6q-0.4,1.6 -2,2.2q0.6,1.8 -1,2.6q-1.6,0.4 -2,-2.2zM613.5,77.69999999999999q2.4,-1.2 4.4,0.4q0.2,2.6 -1.8,4.4q-1.6,-0.4 -1.4,-2.4q-1.4,-0.8 -1.2,-2.4zM609.5,79.69999999999999q1.6,0.2 1.8,1.8q-0.2,1.6 -1,1.8q-1.2,-1.4 -0.8,-3.6z" fill="#b4dbf8"/><circle cx="617.3" cy="82.4" r="3.2" fill="#f9f9f9" fill-opacity="0.75" stroke="#4a4a4a" stroke-width="1"/><path d="M617.3,77.8v9.2M612.7,82.4h9.2" stroke="#4a4a4a" stroke-width="1"/>
<path d="M626.8,78.1h5.2l-2.6,2.9z" fill="#222"/>
<rect x="700.4" y="22.4" width="31.2" height="31" fill="#fcfcfc" stroke="#5a5a5a" stroke-width="1.3"/><rect x="700.4" y="22" width="31.2" height="3.8" fill="#5a5a5a"/><rect x="702" y="23" width="1.9" height="1.9" fill="#fff"/><path d="M704,32h3v3h-3zM704,37.9h3v3h-3zM704,43.9h3v3h-3z" fill="#5a5a5a"/><path d="M710.2,33.5h17.8M710.2,39.4h17.8M710.2,45.4h17.8" stroke="#5a5a5a" stroke-width="1"/>
<g transform="translate(747.2,23)" ><rect x="2.6" y="0.4" width="13" height="12.6" fill="#fafafa" stroke="#cacaca" stroke-width="1"/><rect x="2.6" y="0.2" width="13" height="2" fill="#cacaca"/><path d="M4.6,4.4h1.4v1.4h-1.4zM4.6,7.2h1.4v1.4h-1.4z" fill="#cacaca"/><path d="M7.4,5.1h6.4M7.4,7.9h6.4M7.4,10.7h6.4" stroke="#cacaca" stroke-width="1"/><path d="M0,12.6h5.2" stroke="#cacaca" stroke-width="1.4"/><path d="M4.2,10.2l3.4,2.4l-3.4,2.4z" fill="#cacaca"/></g>
<g transform="translate(747.2,47.4)" ><rect x="0.6" y="0.6" width="12.6" height="12.6" fill="#fafafa" stroke="#cacaca" stroke-width="1"/><rect x="0.6" y="0.2" width="12.6" height="2.2" fill="#cacaca"/><path d="M2.8,5.4h1.4v1.4h-1.4zM2.8,9h1.4v1.4h-1.4z" fill="#cacaca"/><path d="M5.6,6.1h4.6M5.6,9.7h2.4" stroke="#cacaca" stroke-width="1"/><path d="M7,14.2l1,-2.6l6,-5.6l1.8,1.8l-6,5.6z" fill="#cacaca"/></g>
<path d="M883.8,77.6h6.2l-3.1,3.2z" fill="#b4b4b4"/>
<g fill="#63ade6" stroke="#4a98d8" stroke-width="0.7"><circle cx="915.4" cy="26.3" r="4.05"/><rect x="921.6" y="22.3" width="8" height="8" rx="1.6"/><rect x="931.7" y="22.3" width="8.1" height="8"/><circle cx="915.4" cy="36.4" r="4.05"/><rect x="921.6" y="32.4" width="8" height="8" rx="1.6"/><rect x="931.7" y="32.4" width="8.1" height="8"/><circle cx="915.4" cy="46.599999999999994" r="4.05"/><rect x="921.6" y="42.599999999999994" width="8" height="8" rx="1.6"/><rect x="931.7" y="42.599999999999994" width="8.1" height="8"/></g><polygon points="934.7,37.7 936.0,42.2 939.1,40.9 937.8,44.0 942.3,45.3 937.8,46.6 939.1,49.7 936.0,48.4 934.7,52.9 933.4,48.4 930.3,49.7 931.6,46.6 927.1,45.3 931.6,44.0 930.3,40.9 933.4,42.2" fill="#f4a800" stroke="#f9f9f9" stroke-width="1.4" paint-order="stroke"/>
<g fill="#63ade6" stroke="#4a98d8" stroke-width="0.7"><circle cx="978.4" cy="26.3" r="4.05"/><rect x="984.6" y="22.3" width="8" height="8" rx="1.6"/><rect x="994.7" y="22.3" width="8.1" height="8"/><circle cx="978.4" cy="36.4" r="4.05"/><rect x="984.6" y="32.4" width="8" height="8" rx="1.6"/><rect x="994.7" y="32.4" width="8.1" height="8"/><circle cx="978.4" cy="46.599999999999994" r="4.05"/><rect x="984.6" y="42.599999999999994" width="8" height="8" rx="1.6"/><rect x="994.7" y="42.599999999999994" width="8.1" height="8"/></g><path d="M1000.8,49.4l4.8,4" stroke="#8a6d3b" stroke-width="1.8"/><circle cx="997" cy="45.3" r="5.5" fill="#d4d4d4" stroke="#5a5a5a" stroke-width="1.1"/><circle cx="997" cy="45.3" r="7" fill="none" stroke="#f9f9f9" stroke-width="1"/>
<g fill="none" stroke="#e27a2c" stroke-width="2.2"><rect x="-8.6" y="-4.2" width="17.2" height="8.4" rx="4.2" transform="translate(1060.4,28.6) rotate(-37)"/><rect x="-9.4" y="-4.2" width="18.8" height="8.4" rx="4.2" transform="translate(1048.8,37.4) rotate(-37)"/></g>
<rect x="1059.4" y="36.2" width="12.2" height="17.4" fill="#fdfdfd" stroke="#5a5a5a" stroke-width="1.1"/><rect x="1061.6000000000001" y="38.400000000000006" width="7.799999999999999" height="5.3" fill="#1080e8"/><path d="M1062.0,47.400000000000006h7.199999999999999M1062.0,50.400000000000006h7.199999999999999M1064.0,46.0l-1.8,1.4l1.8,1.4M1066.8000000000002,49.0v2.8" stroke="#5a5a5a" stroke-width="1" fill="none"/>
<g transform="translate(1086.7,23.3)" ><rect x="0.3" y="-0.3" width="13.8" height="13.6" fill="#3a8edc"/><rect x="0.3" y="-0.3" width="13.8" height="6" fill="#6db6f2"/><circle cx="10.3" cy="3.6" r="1.8" fill="#fdf0b0"/><path d="M0.3,13.3v-3.4l4,-4l4.4,5v2.4z" fill="#2a7acc"/><rect x="7.6" y="8" width="8.6" height="7" fill="#fdfdfd" stroke="#4a4a4a" stroke-width="1"/><rect x="7.6" y="7.8" width="8.6" height="1.6" fill="#4a4a4a"/><path d="M9.4,11h1.2M9.4,13h1.2M11.6,11h3M11.6,13h3" stroke="#4a4a4a" stroke-width="1"/></g>
<g transform="translate(1086.9,47.2)" ><path d="M0.6,3.6v-3h3M10.6,0.6h3v3M0.6,9.6v3h3" fill="none" stroke="#4a4a4a" stroke-width="1.1"/><path d="M3,5l2.6,-2.4h6v6.2l-2.6,2.4h-6z" fill="#c9c9c9" stroke="#9a9a9a" stroke-width="0.8"/><path d="M3,5h6v6.2M9,5l2.6,-2.4" fill="none" stroke="#9a9a9a" stroke-width="0.8"/><path d="M8.6,9.2h2.6l0.8,1h4.2v5.4h-7.6z" fill="#f2a620"/><path d="M8.6,15.6l1.4,-3.6h7l-1.4,3.6z" fill="#f7c25a"/></g>
<rect x="1159.4" y="22.4" width="27.4" height="22.6" fill="#fcfcfc" stroke="#5a5a5a" stroke-width="1.2"/><rect x="1159.4" y="22" width="27.4" height="4.5" fill="#5a5a5a"/><path d="M1165.8,26v19M1172.6,26v19M1179.4,26v19M1159.4,32.6h27.4M1159.4,38.8h27.4" stroke="#5a5a5a" stroke-width="1.2"/><rect x="1178.2" y="36.2" width="12.4" height="17.4" fill="#fdfdfd" stroke="#5a5a5a" stroke-width="1.1"/><rect x="1180.4" y="38.400000000000006" width="8.0" height="5.3" fill="#1080e8"/><path d="M1180.8,47.400000000000006h7.4M1180.8,50.400000000000006h7.4M1182.8,46.0l-1.8,1.4l1.8,1.4M1185.8000000000002,49.0v2.8" stroke="#5a5a5a" stroke-width="1" fill="none"/>
<g transform="translate(1261.3,23.3)" ><rect x="0.6" y="0.6" width="13.6" height="13.6" fill="none" stroke="#cdcdcd" stroke-width="1.1" stroke-dasharray="2.4 1.6"/><path d="M2.4,10.2l2.6,-4.4l2.6,4.4z" fill="#cdcdcd"/><rect x="8" y="2.2" width="4.4" height="4.2" fill="#cdcdcd"/><path d="M9,8.6h4.6v6h-4.6z" fill="#f9f9f9"/><path d="M9.4,9h3.6M9.4,11.4h3M9.4,9v5.4h3.6" stroke="#cdcdcd" stroke-width="1.2" fill="none"/></g>
<g transform="translate(1261.3,47.3)" ><rect x="0.6" y="0.6" width="13.6" height="13.6" fill="none" stroke="#cdcdcd" stroke-width="1.1" stroke-dasharray="2.4 1.6"/><path d="M2.4,10.2l2.6,-4.4l2.6,4.4z" fill="#cdcdcd"/><rect x="8" y="2.2" width="4.4" height="4.2" fill="#cdcdcd"/></g>
<g transform="translate(1261.3,71.2)" ><rect x="0.6" y="0.6" width="13.6" height="13.6" fill="none" stroke="#333" stroke-width="1.1" stroke-dasharray="2.4 1.6"/><path d="M2.4,10.2l2.6,-4.4l2.6,4.4z" fill="#3cb371"/><rect x="8" y="2.2" width="4.4" height="4.2" fill="#3cb371"/><path d="M7.2,14.6l0.6,-2.4l5.2,-4.6l2,2.2l-5.2,4.6z" fill="#f6bb3a" stroke="#f9f9f9" stroke-width="0.6"/><path d="M12.2,8.3l1.4,-1.2l2,2.2l-1.4,1.2z" fill="#e8262a"/><path d="M7.2,14.6l0.5,-2l1.5,1.6z" fill="#333"/></g>
<rect x="1340.4" y="25.4" width="15.2" height="11.2" fill="#fdfdfd" stroke="#d2d2d2" stroke-width="1"/><path d="M1342.6,27.4v7.2M1344.8,27.4v5.4M1347,27.4v7.2M1349.2,27.4v7.2M1351.2,27.4v7.2M1353.4,27.4v7.2" stroke="#dedede" stroke-width="1"/>
<rect x="1340.4" y="47.4" width="15.2" height="11.2" fill="#4dba6c" stroke="#38a058" stroke-width="1"/><path d="M1342.6,49.2v7.4M1344.8,49.2v5.4M1347,49.2v7.4M1349.2,49.2v7.4M1351.2,49.2v7.4M1353.4,49.2v7.4" stroke="#2e8a4a" stroke-width="1"/>
<path d="M1347,71.4l7.2,13.4h-14.4z" fill="#f5b400"/><path d="M1347.4,75.6v5" stroke="#222" stroke-width="1.4"/><g transform="translate(1340.2,71)" ><rect x="8" y="6.2" width="7.6" height="9.4" fill="#fdfdfd" stroke="#4a4a4a" stroke-width="1"/><rect x="10" y="8.1" width="3.9999999999999996" height="1.6" fill="#1e88e5"/><path d="M9.8,12.4h4.2M12.4,10.8v3.2M11,11.4l-1.2,1l1.2,1" stroke="#4a4a4a" stroke-width="0.9" fill="none"/></g>
<g transform="translate(1414,35)" ><path d="M2.6,0.8h8.6M2.6,0.8q-1.8,0 -1.8,1.6t1.8,1.6h1.4l-1.6,7.4h-1.6q-1.6,0 -1.6,1.4t1.6,1.4h6" fill="none" stroke="#4a4a4a" stroke-width="1.1"/><path d="M4.6,4h6.8M5.4,7.4h3" stroke="#4a4a4a" stroke-width="1"/><rect x="8.2" y="6.4" width="7" height="9.2" fill="#fdfdfd" stroke="#4a4a4a" stroke-width="1"/><rect x="10.2" y="8.3" width="3.4" height="1.6" fill="#1e88e5"/><path d="M10.0,12.600000000000001h4.2M12.6,11.0v3.2M11.2,11.600000000000001l-1.2,1l1.2,1" stroke="#4a4a4a" stroke-width="0.9" fill="none"/></g>
<path d="M1419.6,59q3,2 5.8,2.2q0.4,8 -5.8,11.8q-6.2,-3.8 -5.8,-11.8q2.8,-0.2 5.8,-2.2z" fill="#f0b000"/><path d="M1419.6,62.4v5" stroke="#222" stroke-width="1.5"/><circle cx="1419.6" cy="69.4" r="0.9" fill="#222"/>
<path d="M1481.1,23.2L1496.4,26.2Q1500.6,27.2 1500.8,31L1500.8,42.6Q1500.6,46 1497.4,47.2L1482.4,52.8Q1477.2,53.6 1477,49L1477,27Q1477.4,22.8 1481.1,23.2z" fill="#8a4a6a"/><path d="M1477,27L1489,36L1477,49z" fill="#b83232"/><path d="M1481.1,23.2L1496.4,26.2L1489,36z" fill="#7c3f7e"/><path d="M1496.4,26.2L1500.8,42.6L1489,36z" fill="#4f8fa8"/><path d="M1489,36L1500.8,42.6L1482.4,52.8z" fill="#4f8f6a"/><path d="M1489,36L1482.4,52.8L1477,49z" fill="#a0506a"/><path d="M1483,31l8,1l-2,9l-7,-2z" fill="#5a4a6a" fill-opacity="0.7"/><circle cx="1481.1" cy="26.9" r="4" fill="#d0303a"/><circle cx="1496" cy="29.9" r="4" fill="#3f9fd0"/><circle cx="1496.8" cy="43.1" r="4" fill="#8a8660"/><circle cx="1481.1" cy="49" r="4" fill="#b45a62"/><circle cx="1481.1" cy="26.9" r="1.8" fill="#fff"/><circle cx="1496" cy="29.9" r="1.8" fill="#fff"/><circle cx="1496.8" cy="43.1" r="1.8" fill="#fff"/><circle cx="1481.1" cy="49" r="1.8" fill="#fff"/>
<rect x="1524" y="22.1" width="27" height="6.8" rx="3.4" fill="#8a8468"/><rect x="1524" y="31.2" width="27" height="6.8" rx="3.4" fill="#c8414a"/><rect x="1524" y="40.1" width="22" height="6.8" rx="3.4" fill="#4a9bc6"/><circle cx="1527.4" cy="25.5" r="1.5" fill="#fff"/><circle cx="1527.4" cy="34.6" r="1.5" fill="#fff"/><circle cx="1527.4" cy="43.5" r="1.5" fill="#fff"/><rect x="1542.4" y="39.6" width="13.4" height="12.8" fill="#24d464" stroke="#18a84c" stroke-width="0.9"/><path d="M1546.4,42.2v7.6l6.4,-3.8z" fill="#0a4a1c"/>
<path d="M275.6,143h9.4v1.6h5.4v6h1v6.4h-9.6v-1.2h-6.2z" fill="#fbfbfb" stroke="#55607a" stroke-width="1"/><path d="M285,144.6v3.6M281.4,150.6v6M284,150.6h1.4M287,150.6h1.6" stroke="#55607a" stroke-width="1" stroke-dasharray="1.6 1.2" fill="none"/>
<path d="M383.8,146.4l8.6,8.2M392.4,146.4l-8.6,8.2" stroke="#7b869c" stroke-width="1.3"/>
<path d="M256.2,144.7l8,7.8M264.2,144.7l-8,7.8" stroke="#777" stroke-width="1.6"/>
<path d="M256.2,552.7l8,7.8M264.2,552.7l-8,7.8" stroke="#777" stroke-width="1.6"/>
<path d="M250,191.4h8l-4,3.8z" fill="#9a9a9a"/>
<path d="M137.4,239.4l3,3.4l3,-3.4" fill="none" stroke="#8a8a8a" stroke-width="1.5"/>
<g fill="#e8eef6" stroke="#3a4660" stroke-width="1"><rect x="154.2" y="235" width="6" height="5.6" rx="1"/><rect x="161.4" y="234.4" width="6.6" height="5.4" rx="1"/><rect x="154.2" y="242.6" width="6" height="6" rx="1"/><rect x="162.4" y="241.6" width="7.2" height="8" fill="#fdfdfd"/></g><rect x="164.2" y="243.4" width="3.6" height="1.5" fill="#2a6fd0"/><path d="M164,247.2h3.6M166.4,246l1.2,1.2l-1.2,1.2" stroke="#3a4660" stroke-width="0.8" fill="none"/>
<path d="M236.8,267.6l2.6,-2.8l2.6,2.8M236.8,271.4l2.6,-2.8l2.6,2.8" fill="none" stroke="#222" stroke-width="1.2"/>
<path d="M253,270l4.4,-3.8l4.4,3.8" fill="none" stroke="#9c9c9c" stroke-width="1.4"/>
<path d="M253,511l4.4,3.8l4.4,-3.8" fill="none" stroke="#9c9c9c" stroke-width="1.4"/>
<path d="M253,616l4.4,-3.8l4.4,3.8" fill="none" stroke="#9c9c9c" stroke-width="1.4"/>
<text x="3.6" y="532.8" font-family="Liberation Sans, sans-serif" font-size="7.6" fill="#555">Z</text><text x="3.4" y="540.6" font-family="Liberation Sans, sans-serif" font-size="7.6" font-weight="bold" fill="#2a8ae0">A</text><path d="M14,526.4v10.6M11.8,535.4l2.2,3l2.2,-3z" stroke="#333" stroke-width="1.1" fill="#333"/>
<rect x="3.4" y="648.6999999999999" width="15" height="15" fill="none" stroke="#4a4a4a" stroke-width="1.1" stroke-dasharray="2.7 1"/><rect x="5.8" y="651.0999999999999" width="10.2" height="10.2" fill="#fbfbfb" stroke="#4a4a4a" stroke-width="1"/>
<rect x="3.4" y="668.8" width="15" height="15" fill="none" stroke="#4a4a4a" stroke-width="1.1" stroke-dasharray="2.7 1"/><rect x="5.8" y="671.1999999999999" width="10.2" height="10.2" fill="#fbfbfb" stroke="#4a4a4a" stroke-width="1"/>
<rect x="3.4" y="688.9" width="15" height="15" fill="none" stroke="#4a4a4a" stroke-width="1.1" stroke-dasharray="2.7 1"/><rect x="5.8" y="691.3" width="10.2" height="10.2" fill="#fbfbfb" stroke="#4a4a4a" stroke-width="1"/>
<rect x="3.4" y="709.0" width="15" height="15" fill="none" stroke="#4a4a4a" stroke-width="1.1" stroke-dasharray="2.7 1"/><rect x="5.8" y="711.4" width="10.2" height="10.2" fill="#fbfbfb" stroke="#4a4a4a" stroke-width="1"/>
<rect x="3.4" y="769.1" width="15" height="15" fill="none" stroke="#4a4a4a" stroke-width="1.1" stroke-dasharray="2.7 1"/><rect x="5.8" y="771.5" width="10.2" height="10.2" fill="#fbfbfb" stroke="#4a4a4a" stroke-width="1"/>
<rect x="3.4" y="789.1" width="15" height="15" fill="none" stroke="#4a4a4a" stroke-width="1.1" stroke-dasharray="2.7 1"/><rect x="5.8" y="791.5" width="10.2" height="10.2" fill="#fbfbfb" stroke="#4a4a4a" stroke-width="1"/>
<rect x="3.4" y="809.0" width="15" height="15" fill="none" stroke="#4a4a4a" stroke-width="1.1" stroke-dasharray="2.7 1"/><rect x="5.8" y="811.4" width="10.2" height="10.2" fill="#fbfbfb" stroke="#4a4a4a" stroke-width="1"/>
<rect x="3.4" y="849.0" width="15" height="15" fill="none" stroke="#4a4a4a" stroke-width="1.1" stroke-dasharray="2.7 1"/><rect x="5.8" y="851.4" width="10.2" height="10.2" fill="#fbfbfb" stroke="#4a4a4a" stroke-width="1"/>
<rect x="3.4" y="869.0" width="15" height="15" fill="none" stroke="#4a4a4a" stroke-width="1.1" stroke-dasharray="2.7 1"/><rect x="5.8" y="871.4" width="10.2" height="10.2" fill="#fbfbfb" stroke="#4a4a4a" stroke-width="1"/>
</svg>
<div class="g" id="labels">
<span class="t" id="t0" style="left:12.80px;letter-spacing:0.147px;top:-0.96px;">Architecture</span>
<span class="t" id="t1" style="left:97.60px;letter-spacing:0.046px;top:-0.96px;">Structure</span>
<span class="t" id="t2" style="left:165.60px;letter-spacing:0.091px;top:-0.96px;">Acier</span>
<span class="t" id="t3" style="left:212.90px;letter-spacing:0.018px;top:-0.96px;">Préfabrication</span>
<span class="t" id="t4" style="left:306.70px;letter-spacing:-0.386px;top:-0.96px;">Systèmes</span>
<span class="t" id="t5" style="left:375.70px;letter-spacing:-0.266px;top:-0.96px;">Insérer</span>
<span class="t" id="t6" style="left:430.80px;letter-spacing:0.181px;top:-0.96px;">Annoter</span>
<span class="t" id="t7" style="left:493.60px;letter-spacing:-0.123px;top:-0.96px;">Analyser</span>
<span class="t" id="t8" style="left:558.50px;letter-spacing:-0.013px;top:-0.96px;">Volume et site</span>
<span class="t" id="t9" style="left:652.80px;letter-spacing:0.014px;top:-0.96px;">Collaborer</span>
<span class="t" id="t10" style="left:727.80px;letter-spacing:0.031px;top:-0.96px;">Vue</span>
<span class="t" id="t11" style="left:767.70px;letter-spacing:-0.377px;top:-0.96px;">Gérer</span>
<span class="t" id="t12" style="left:815.60px;letter-spacing:0.143px;top:-0.96px;">Compléments</span>
<span class="t" id="t13" style="left:910.40px;letter-spacing:-0.108px;top:-0.96px;">DiRootsOne</span>
<span class="t" id="t14" style="left:993.70px;letter-spacing:-0.216px;top:-0.96px;">NavVis</span>
<span class="t" id="t15" style="left:1049.80px;letter-spacing:-0.102px;top:-0.96px;">pyRevit</span>
<span class="t" id="t16" style="left:1108.60px;letter-spacing:-0.418px;top:-0.96px;">RG Tools</span>
<span class="t" id="t17" style="left:1173.90px;letter-spacing:0.352px;top:-0.96px;">Modifier</span>
<span class="t" id="t18" style="left:-26.39px;top:57.64px;">Modifier</span>
<span class="t" id="t19" style="left:-47.42px;top:93.64px;">Sélectionner</span>
<span class="t" id="t20" style="left:43.70px;letter-spacing:0.024px;top:57.64px;">Matériaux</span>
<span class="t" id="t21" style="left:125.50px;letter-spacing:-0.073px;top:23.74px;">Styles d'objets</span>
<span class="t" id="t22" style="left:125.50px;letter-spacing:-0.043px;top:47.74px;">Accrochages</span>
<span class="t" id="t23" style="left:125.50px;letter-spacing:0.071px;top:71.64px;">Informations sur le projet</span>
<span class="t" id="t24" style="left:285.40px;letter-spacing:-0.245px;top:57.64px;">Service</span>
<span class="t" id="t25" style="left:266.80px;letter-spacing:-0.152px;top:72.74px;">de paramètres</span>
<span class="t" id="t26" style="left:264.80px;letter-spacing:-0.273px;top:93.64px;">Paramètres</span>
<span class="t" id="t27" style="left:467.70px;letter-spacing:-0.233px;top:57.64px;">Paramètres</span>
<span class="t" id="t28" style="left:453.50px;letter-spacing:-0.018px;top:72.74px;">supplémentaires</span>
<span class="t" id="t29" style="left:556.90px;letter-spacing:0.047px;top:93.64px;">Emplacement du projet</span>
<span class="t" id="t30" style="left:691.70px;letter-spacing:-0.257px;top:57.64px;">Variantes</span>
<span class="t" id="t31" style="color:#b4b4b4;left:746.80px;letter-spacing:-0.115px;top:71.64px;">Modèle de base</span>
<span class="t" id="t32" style="left:766.70px;letter-spacing:-0.235px;top:93.64px;">Variantes</span>
<span class="t" id="t33" style="left:913.80px;letter-spacing:-0.303px;top:57.64px;">Créer</span>
<span class="t" id="t34" style="left:900.80px;letter-spacing:0.012px;top:72.74px;">une étude</span>
<span class="t" id="t35" style="left:968.80px;letter-spacing:-0.148px;top:57.64px;">Explorer</span>
<span class="t" id="t36" style="left:959.80px;letter-spacing:-0.202px;top:72.74px;">les résultats</span>
<span class="t" id="t37" style="left:900.80px;letter-spacing:0.015px;top:93.64px;">Conception générative</span>
<span class="t" id="t38" style="left:1037.20px;letter-spacing:-0.266px;top:57.64px;">Gestion</span>
<span class="t" id="t39" style="left:1034.20px;letter-spacing:-0.275px;top:72.74px;">des liens</span>
<span class="t" id="t40" style="left:1031.80px;letter-spacing:-0.160px;top:93.64px;">Gérer le projet</span>
<span class="t" id="t41" style="left:1156.90px;letter-spacing:-0.605px;top:57.64px;">Phases</span>
<span class="t" id="t42" style="left:1116.60px;letter-spacing:-0.074px;top:93.64px;">Phase de construction</span>
<span class="t" id="t43" style="left:1244.70px;letter-spacing:0.092px;top:93.64px;">Sélection</span>
<span class="t" id="t44" style="left:1303.70px;letter-spacing:-0.183px;top:93.64px;">Renseignements</span>
<span class="t" id="t45" style="left:1401.50px;letter-spacing:0.026px;top:93.64px;">Macros</span>
<span class="t" id="t46" style="left:1467.00px;letter-spacing:0.035px;top:57.64px;">Dynamo</span>
<span class="t" id="t47" style="left:1520.90px;letter-spacing:-0.076px;top:57.64px;">Lecteur</span>
<span class="t" id="t48" style="left:1517.90px;letter-spacing:0.102px;top:72.74px;">Dynamo</span>
<span class="t" id="t49" style="left:1451.60px;letter-spacing:0.060px;top:93.64px;">Programmation visuelle</span>
<span class="t" id="t50" style="color:#000;font-weight:bold;left:298.20px;letter-spacing:0.080px;top:143.84px;">Niveau 0</span>
<span class="t" id="t51" style="left:-51.00px;top:141.74px;">Propriétés</span>
<span class="t" id="t52" style="left:21.60px;letter-spacing:-0.030px;top:185.54px;">Plan d'étage</span>
<span class="t" id="t53" style="left:-49.58px;top:234.64px;">Plan d'étage: Niveau 0</span>
<span class="t" id="t54" style="left:174.90px;letter-spacing:0.133px;top:234.64px;">Modifier le type</span>
<span class="t" id="t55" style="left:-51.59px;top:261.54px;">Graphismes</span>
<span class="t" id="t56" style="color:#1e1e1e;left:-46.91px;top:278.54px;">Echelle de la vue</span>
<span class="t" id="t57" style="color:#9a9a9a;left:-44.30px;top:296.54px;">Valeur de l'échelle</span>
<span class="t" id="t58" style="color:#1e1e1e;left:-41.34px;top:314.54px;">Afficher le modèle</span>
<span class="t" id="t59" style="color:#1e1e1e;left:-44.06px;top:332.54px;">Niveau de détail</span>
<span class="t" id="t60" style="color:#1e1e1e;left:-45.42px;top:350.54px;">Visibilité des éléments</span>
<span class="t" id="t61" style="color:#1e1e1e;left:-44.58px;top:368.84px;">Remplacements visibilit...</span>
<span class="t" id="t62" style="color:#1e1e1e;left:-44.03px;top:386.84px;">Options d'affichage des...</span>
<span class="t" id="t63" style="color:#1e1e1e;left:-41.70px;top:404.64px;">Orientation</span>
<span class="t" id="t64" style="color:#9a9a9a;left:-43.20px;top:422.64px;">Affichage des jonctions...</span>
<span class="t" id="t65" style="color:#1e1e1e;left:-43.06px;top:440.64px;">Discipline</span>
<span class="t" id="t66" style="color:#1e1e1e;left:-45.52px;top:458.64px;">Afficher les lignes cach...</span>
<span class="t" id="t67" style="color:#1e1e1e;left:-43.93px;top:476.64px;">Emplacement du choix ...</span>
<span class="t" id="t68" style="color:#1e1e1e;left:-58.41px;top:494.64px;">Schéma des couleurs</span>
<span class="t" id="t69" style="color:#9a9a9a;left:64.10px;letter-spacing:-0.458px;top:296.54px;">1:</span>
<span class="t" id="t70" style="left:98.10px;letter-spacing:-0.458px;top:278.54px;">1 : 100</span>
<span class="t" id="t71" style="color:#9a9a9a;left:94.90px;letter-spacing:-0.410px;top:296.54px;">100</span>
<span class="t" id="t72" style="left:94.70px;letter-spacing:0.117px;top:314.54px;">Normal(e)</span>
<span class="t" id="t73" style="left:94.70px;letter-spacing:0.274px;top:332.54px;">Moyen</span>
<span class="t" id="t74" style="left:94.70px;letter-spacing:0.213px;top:350.54px;">Afficher l'original</span>
<span class="t" id="t75" style="left:136.90px;letter-spacing:0.179px;top:368.84px;">Modifier...</span>
<span class="t" id="t76" style="left:136.90px;letter-spacing:0.179px;top:386.84px;">Modifier...</span>
<span class="t" id="t77" style="left:94.70px;letter-spacing:0.175px;top:404.64px;">Nord du projet</span>
<span class="t" id="t78" style="color:#9a9a9a;left:94.70px;letter-spacing:-0.019px;top:422.64px;">Nettoyer toutes les jonct...</span>
<span class="t" id="t79" style="left:94.70px;letter-spacing:0.139px;top:440.64px;">Architecture</span>
<span class="t" id="t80" style="left:94.70px;letter-spacing:-0.048px;top:458.64px;">Par discipline</span>
<span class="t" id="t81" style="left:94.70px;letter-spacing:0.041px;top:476.64px;">Arrière-plan</span>
<span class="t" id="t82" style="left:139.40px;letter-spacing:0.179px;top:494.64px;">&lt;Aucun&gt;</span>
<span class="t" id="t83" style="color:#a8a8a8;left:201.60px;letter-spacing:0.255px;top:525.54px;">Appliquer</span>
<span class="t" id="t84" style="left:-50.27px;top:549.64px;">Arborescence du projet - Projet1</span>
<span class="t" id="t85" style="color:#b4bcc6;left:-12.03px;top:579.34px;">Rechercher</span>
<span class="t" id="t86" style="color:#404040;left:-9.65px;top:610.24px;">Vues (tout)</span>
<span class="t" id="t87" style="color:#404040;left:-14.86px;top:629.94px;">Plans d'étage</span>
<span class="t" id="t88" style="color:#2a2a2a;font-weight:bold;left:22.70px;letter-spacing:0.105px;top:649.74px;">Niveau 0</span>
<span class="t" id="t89" style="color:#404040;left:22.70px;letter-spacing:-0.122px;top:669.94px;">Niveau 1</span>
<span class="t" id="t90" style="color:#404040;left:22.80px;letter-spacing:-0.320px;top:690.14px;">Plan Masse</span>
<span class="t" id="t91" style="color:#404040;left:22.80px;letter-spacing:0.081px;top:710.24px;">Toiture</span>
<span class="t" id="t92" style="color:#404040;left:-14.21px;top:730.14px;">Plans de plafond</span>
<span class="t" id="t93" style="color:#404040;left:-15.39px;top:750.24px;">Vues 3D</span>
<span class="t" id="t94" style="color:#404040;left:22.80px;letter-spacing:-0.092px;top:770.34px;">IsolateWarningElements</span>
<span class="t" id="t95" style="color:#404040;left:22.80px;letter-spacing:-0.073px;top:790.24px;">OverrideWarningElements</span>
<span class="t" id="t96" style="color:#404040;left:22.80px;letter-spacing:-0.240px;top:809.84px;">{3D}</span>
<span class="t" id="t97" style="color:#404040;left:-15.37px;top:829.94px;">Elévations</span>
<span class="t" id="t98" style="color:#404040;left:22.80px;letter-spacing:-0.257px;top:850.04px;">Elévation Est</span>
</div>
<svg class="g" id="overlay" width="1754" height="870" viewBox="0 0 1754 870"><circle cx="1351.6" cy="51.4" r="77" fill="none" stroke="#808080" stroke-width="2.8"/><path d="M1352,51V67.4L1355.8,63.9L1358.7,70.3L1361.2,69.2L1358.4,63H1363.6Z" fill="#fff" stroke="#141428" stroke-width="1.1" stroke-linejoin="round"/></svg>
</body></html>
